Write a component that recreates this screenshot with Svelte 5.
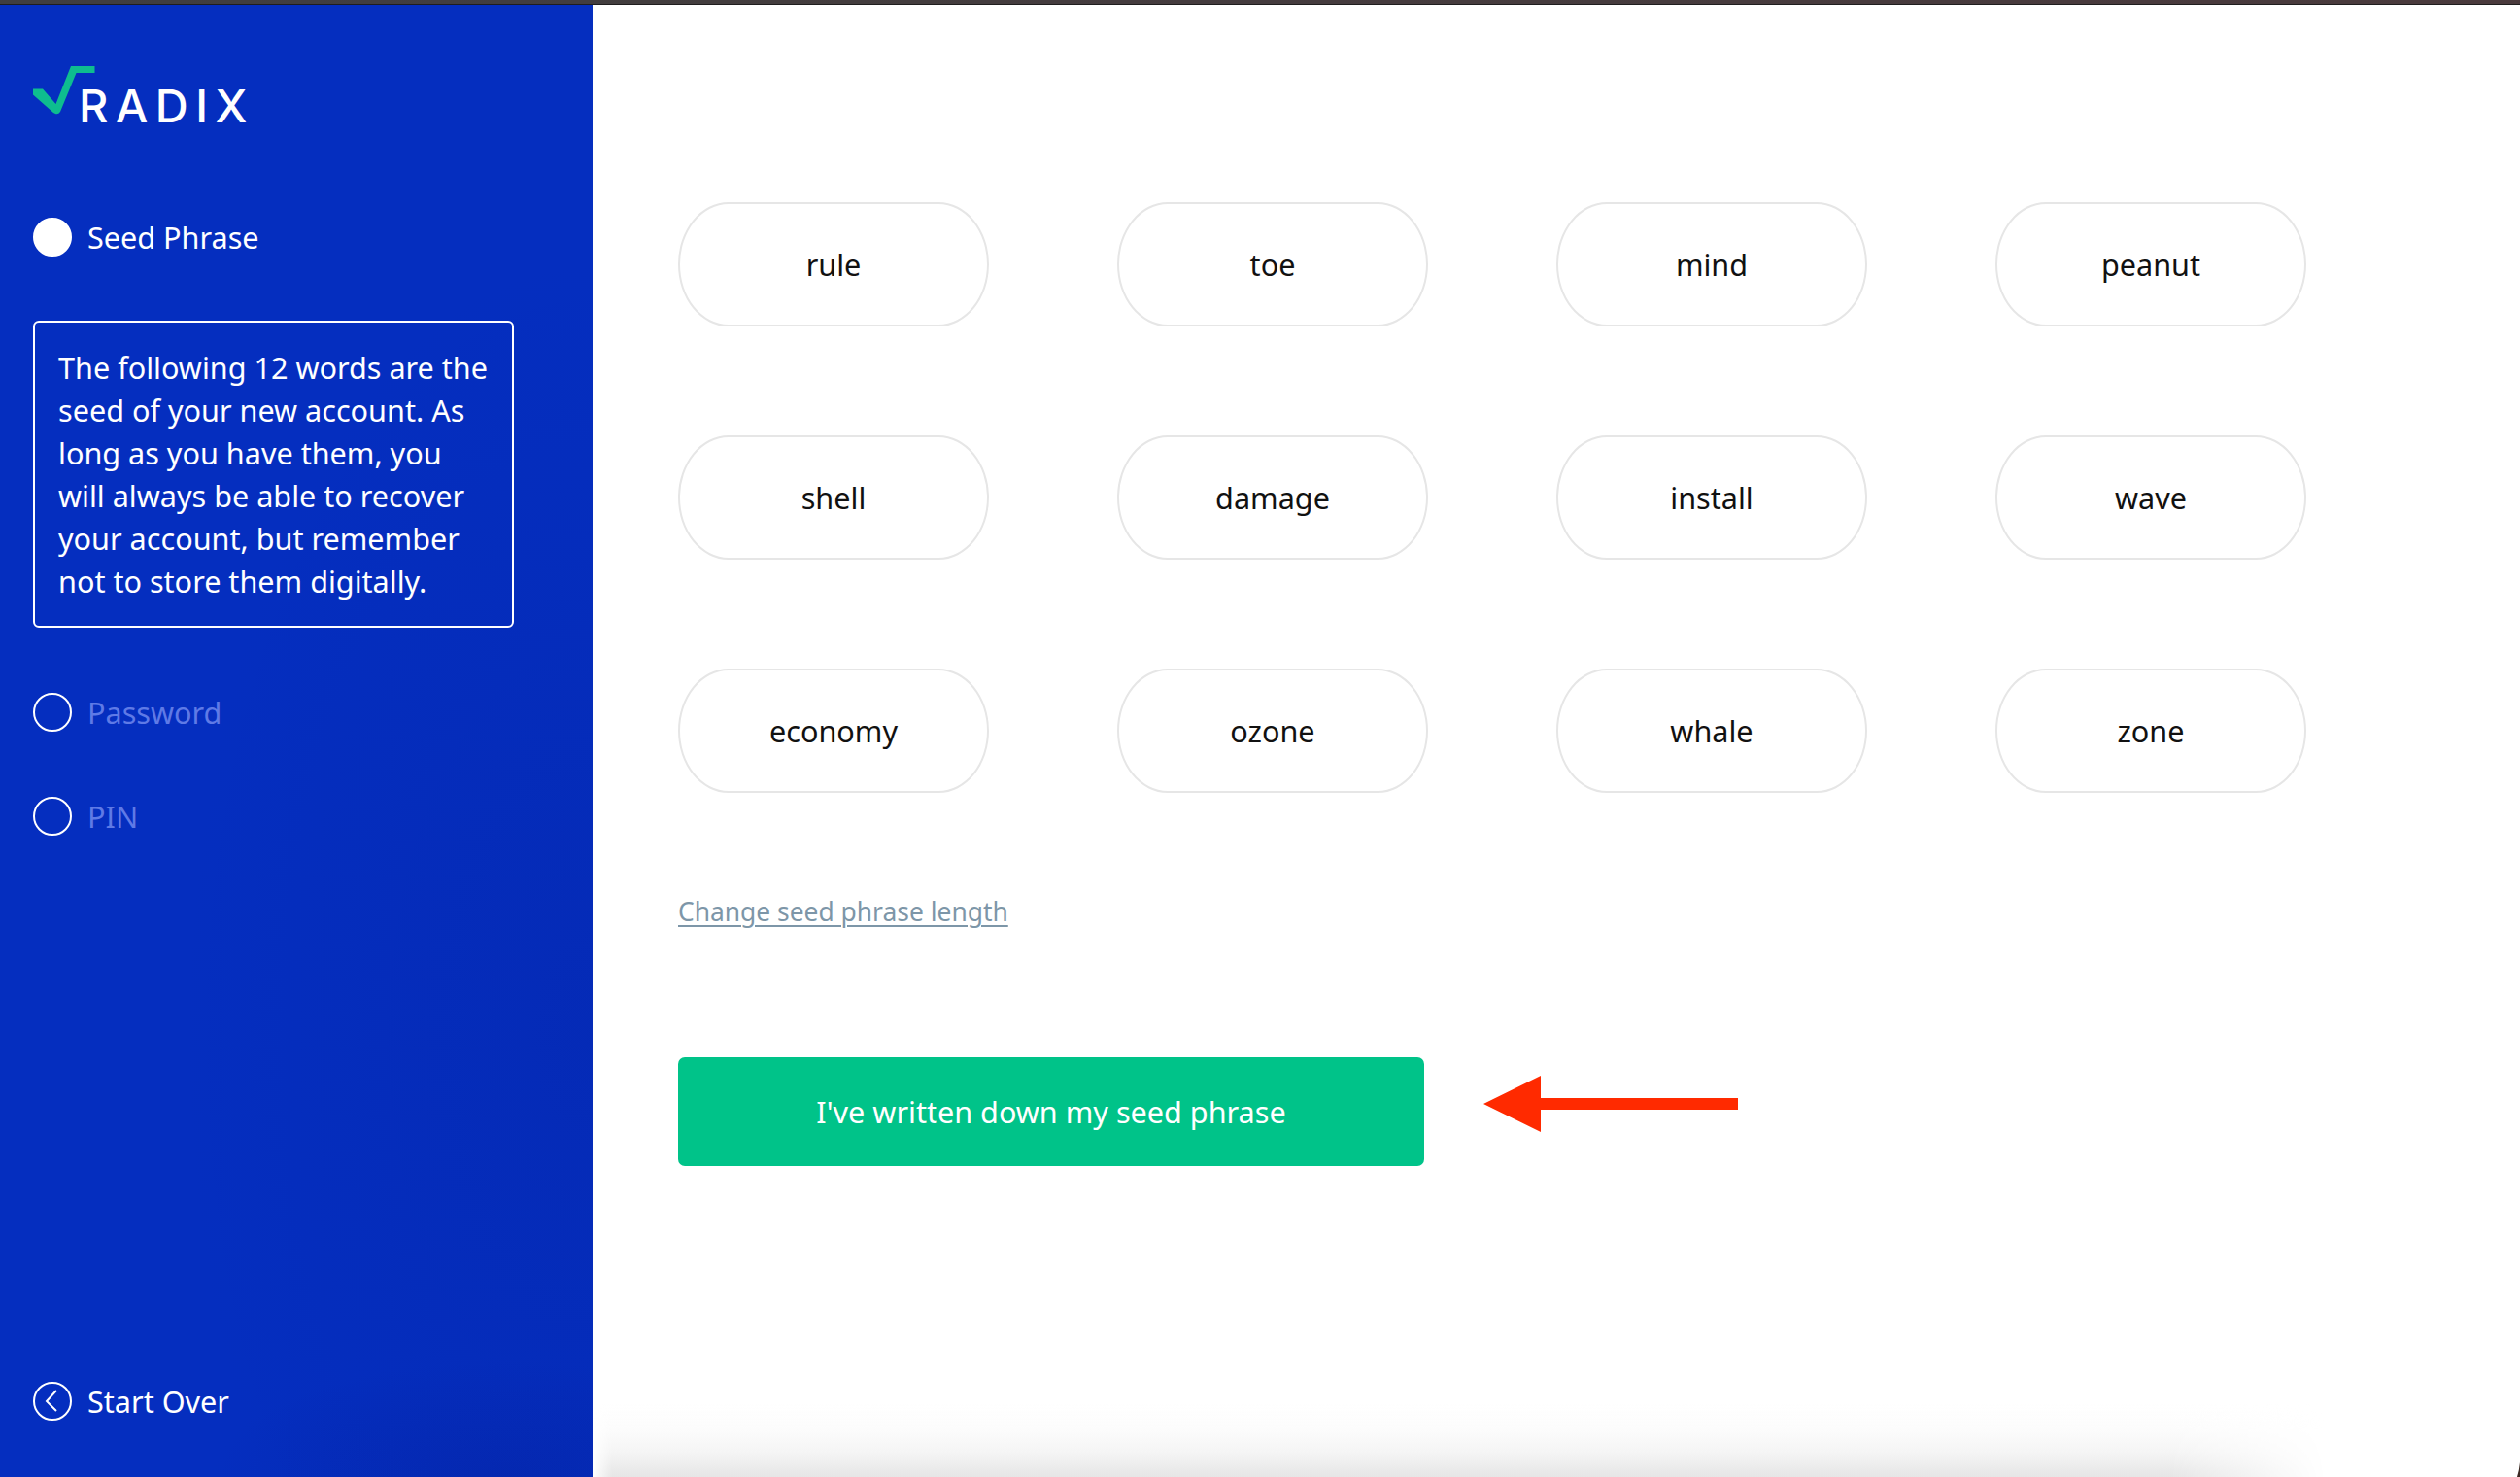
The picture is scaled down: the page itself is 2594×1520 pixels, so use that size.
<script>
  const words = [
    "rule", "toe", "mind", "peanut",
    "shell", "damage", "install", "wave",
    "economy", "ozone", "whale", "zone",
  ];
</script>

<div class="page">
  <div class="topbar"></div>
  <div class="body">
    <aside class="sidebar">
      <div class="logo">
        <svg class="root" width="64" height="50" viewBox="0 0 64 50">
          <path d="M0 23.5 L10 23.5 L23.5 39 L39 0 L63.5 0 L63.5 7 L44.5 7 L28 47 Q26 50 23 49 L21 48 L0 29.5 Z" fill="#0ebd8f" />
        </svg>
        <span class="logo-text">RADIX</span>
      </div>

      <div class="step active">
        <span class="dot filled"></span>
        <span>Seed Phrase</span>
      </div>
      <div class="note">
        The following 12 words are the seed of your new account. As long as you have them, you will always be able to recover your account, but remember not to store them digitally.
      </div>
      <div class="step muted first">
        <span class="dot"></span>
        <span>Password</span>
      </div>
      <div class="step muted second">
        <span class="dot"></span>
        <span>PIN</span>
      </div>

      <div class="start-over">
        <svg width="40" height="40" viewBox="0 0 40 40">
          <circle cx="20" cy="20" r="19" fill="none" stroke="#fff" stroke-width="2" />
          <path d="M24 9 L14 20 L24 30" fill="none" stroke="#fff" stroke-width="2" />
        </svg>
        <span>Start Over</span>
      </div>
    </aside>

    <main class="main">
      <div class="grid">
        {#each words as word}
          <div class="word">{word}</div>
        {/each}
      </div>

      <a class="change" href="#top">Change seed phrase length</a>

      <div class="actions">
        <button class="submit">I've written down my seed phrase</button>
        <svg class="arrow" width="262" height="58" viewBox="0 0 262 58">
          <path d="M0 29 L59 0 L59 23 L262 23 L262 35 L59 35 L59 58 Z" fill="#ff2a00" />
        </svg>
      </div>

      <div class="shade"></div>
      <svg class="corner" width="3" height="15" viewBox="0 0 3 15">
        <path d="M3 0 L3 15 L0 15 Q2 9 3 0 Z" fill="#3c2a24" />
      </svg>
    </main>
  </div>
</div>

<style>
  :global(body) {
    margin: 0;
    background: #fff;
  }

  .page {
    height: 100vh;
    display: flex;
    flex-direction: column;
    overflow: hidden;
    font-family: "Noto Sans", sans-serif;
    font-size: 30.6px;
    line-height: 44px;
  }

  .topbar {
    height: 4px;
    flex: none;
    border-bottom: 1px solid #1f1d1e;
    background: linear-gradient(to right, #403e3f, #4a3a3d);
  }

  .body {
    flex: 1;
    display: flex;
    min-height: 0;
  }

  .sidebar {
    width: 610px;
    flex: none;
    box-sizing: border-box;
    padding: 63px 81px 0 34px;
    display: flex;
    flex-direction: column;
    color: #fff;
    background:
      radial-gradient(ellipse 420px 800px at 100% 70%, rgba(3, 28, 150, 0.2), rgba(3, 28, 150, 0)),
      radial-gradient(ellipse 300px 120px at 85% 100%, rgba(3, 28, 150, 0.3), rgba(3, 28, 150, 0)),
      #052ebf;
  }

  .logo {
    display: flex;
    align-items: flex-end;
    height: 58px;
  }

  .root {
    flex: none;
    margin-bottom: 8px;
  }

  .logo-text {
    margin-left: -17px;
    font-family: "Inter", sans-serif;
    font-size: 47px;
    line-height: 34px;
    letter-spacing: 7.5px;
    font-weight: 500;
  }

  .step {
    display: flex;
    align-items: center;
    gap: 16px;
  }

  .step.active {
    margin-top: 96px;
  }

  .step.first {
    margin-top: 65px;
  }

  .step.second {
    margin-top: 63px;
  }

  .muted {
    color: #5f7ae6;
  }

  .dot {
    width: 40px;
    height: 40px;
    box-sizing: border-box;
    border: 2px solid #fff;
    border-radius: 50%;
    flex: none;
  }

  .dot.filled {
    background: #fff;
  }

  .note {
    margin-top: 64px;
    box-sizing: border-box;
    height: 316px;
    padding: 24px 20px 23px 24px;
    border: 2px solid #fff;
    border-radius: 6px;
  }

  .start-over {
    margin-top: auto;
    margin-bottom: 56px;
    display: flex;
    align-items: center;
    gap: 16px;
  }

  .main {
    flex: 1;
    position: relative;
    box-sizing: border-box;
    padding: 203px 0 0 88px;
    background: #fff;
    color: #111;
  }

  .grid {
    display: grid;
    grid-template-columns: repeat(4, 320px);
    grid-auto-rows: 128px;
    column-gap: 132px;
    row-gap: 112px;
  }

  .word {
    box-sizing: border-box;
    display: flex;
    align-items: center;
    justify-content: center;
    border: 2px solid #e6e6e6;
    border-radius: 52px / 64px;
  }

  .change {
    display: inline-block;
    margin-top: 100px;
    font-size: 26.4px;
    color: #7d96a8;
    text-decoration: underline;
    text-underline-offset: 4px;
    text-decoration-thickness: 2px;
  }

  .actions {
    margin-top: 128px;
    display: flex;
    align-items: center;
    gap: 61px;
  }

  .submit {
    width: 768px;
    height: 112px;
    border: none;
    border-radius: 7px;
    background: #00c389;
    color: #fff;
    font: inherit;
  }

  .arrow {
    margin-bottom: 16px;
  }

  .shade {
    position: absolute;
    left: 0;
    right: 200px;
    bottom: 0;
    height: 75px;
    background: linear-gradient(
      to bottom,
      rgba(230, 230, 230, 0) 0%,
      #fcfcfc 35%,
      #f5f5f5 65%,
      #e6e6e6 100%
    );
    mask-image: linear-gradient(to right, transparent 0, #000 20px, #000 91%, transparent 100%);
  }

  .corner {
    position: absolute;
    right: 0;
    bottom: 0;
  }
</style>
